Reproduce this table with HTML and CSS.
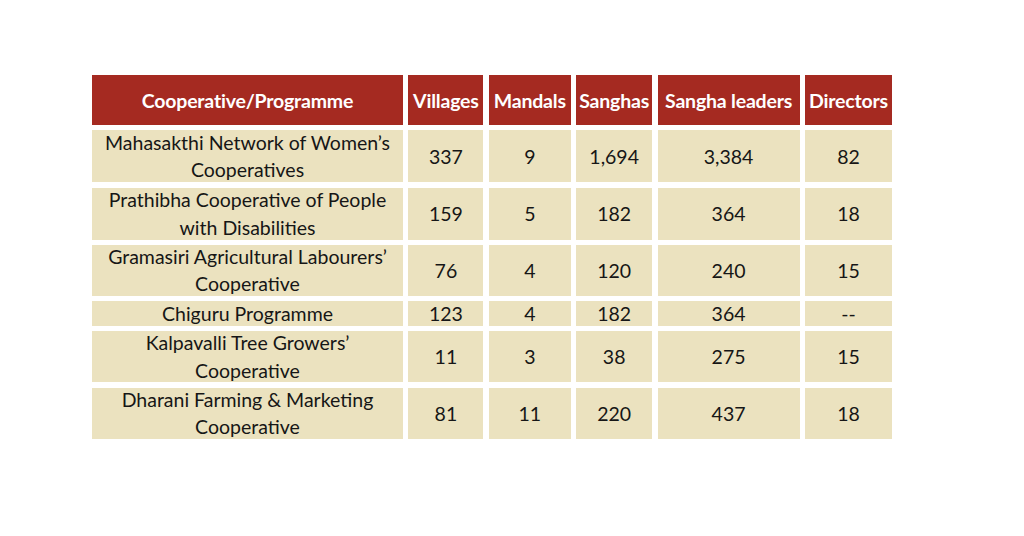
FILE: index.html
```html
<!DOCTYPE html>
<html lang="en">
<head>
<meta charset="utf-8">
<title>Cooperatives</title>
<link rel="stylesheet" href="styles.css">
</head>
<body>
<div class="page">
  <div class="table">
    <div class="th">Cooperative/Programme</div>
    <div class="th">Villages</div>
    <div class="th">Mandals</div>
    <div class="th">Sanghas</div>
    <div class="th">Sangha leaders</div>
    <div class="th">Directors</div>

    <div class="td">Mahasakthi Network of Women’s<br>Cooperatives</div>
    <div class="td">337</div>
    <div class="td">9</div>
    <div class="td">1,694</div>
    <div class="td">3,384</div>
    <div class="td">82</div>

    <div class="td">Prathibha Cooperative of People<br>with Disabilities</div>
    <div class="td">159</div>
    <div class="td">5</div>
    <div class="td">182</div>
    <div class="td">364</div>
    <div class="td">18</div>

    <div class="td">Gramasiri Agricultural Labourers’<br>Cooperative</div>
    <div class="td">76</div>
    <div class="td">4</div>
    <div class="td">120</div>
    <div class="td">240</div>
    <div class="td">15</div>

    <div class="td">Chiguru Programme</div>
    <div class="td">123</div>
    <div class="td">4</div>
    <div class="td">182</div>
    <div class="td">364</div>
    <div class="td">--</div>

    <div class="td">Kalpavalli Tree Growers’<br>Cooperative</div>
    <div class="td">11</div>
    <div class="td">3</div>
    <div class="td">38</div>
    <div class="td">275</div>
    <div class="td">15</div>

    <div class="td">Dharani Farming &amp; Marketing<br>Cooperative</div>
    <div class="td">81</div>
    <div class="td">11</div>
    <div class="td">220</div>
    <div class="td">437</div>
    <div class="td">18</div>
  </div>
</div>
</body>
</html>
```
FILE: styles.css
```css
html, body {
  margin: 0;
  padding: 0;
  background: #ffffff;
}

.page {
  width: 1024px;
  height: 536px;
  padding: 75px 0 0 92px;
  box-sizing: border-box;
  font-family: Lato, "Open Sans", sans-serif;
}

.table {
  display: grid;
  grid-template-columns: 311px 75px 82px 76px 142px 87px;
  grid-template-rows: 50px 52px 52px 51px 25px 51px 51px;
  column-gap: 5.4px;
  row-gap: 5.3px;
  width: 800px;
}

.th {
  background: #a52a21;
  color: #ffffff;
  font-weight: 700;
  font-size: 19.5px;
  display: flex;
  align-items: center;
  justify-content: center;
  text-align: center;
  white-space: nowrap;
  letter-spacing: -0.2px;
}

.td {
  background: #ebe2bf;
  color: #161616;
  font-size: 19.5px;
  line-height: 27.5px;
  display: flex;
  align-items: center;
  justify-content: center;
  text-align: center;
  white-space: nowrap;
  overflow: visible;
}
```
